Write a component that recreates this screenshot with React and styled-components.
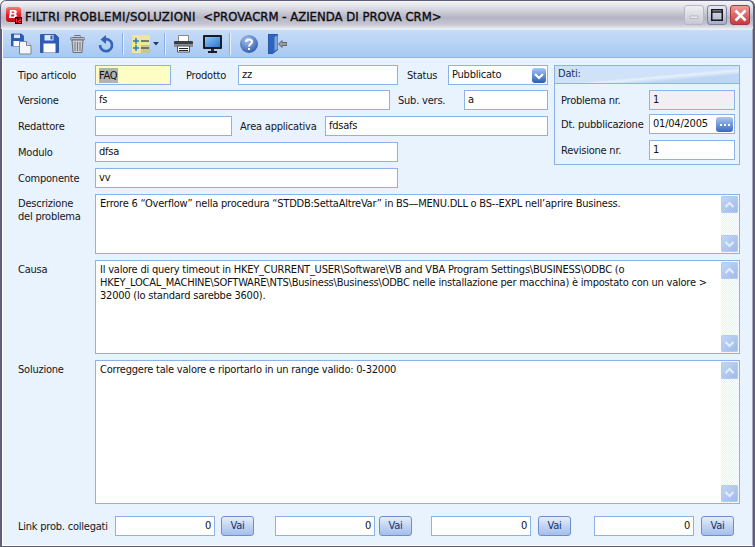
import React from "react";
import styled, { createGlobalStyle } from "styled-components";

const FONT = `"DejaVu Sans Condensed", "Noto Sans", sans-serif`;

const Global = createGlobalStyle`
  html, body { margin: 0; padding: 0; background: #fff; }
  body { width: 755px; height: 547px; overflow: hidden; font-family: ${FONT}; letter-spacing: -0.22px; }
`;

const Win = styled.div`
  width: 755px; height: 547px; box-sizing: border-box;
  display: flex; flex-direction: column;
  background: #5e5e7c; border-radius: 6px 6px 0 0; padding: 1px 2px 1px 1px; overflow: hidden;
`;
const TitleBar = styled.div`
  height: 28px; flex: none; display: flex; align-items: center; padding: 0 3px 0 5px;
  background: linear-gradient(#f6f6f8 0, #dcdce4 25%, #b4b4c4 60%, #c8c8d4 85%, #eeeef2 100%);
  border-radius: 5px 5px 0 0;
`;
const Title = styled.div`
  margin-left: 3px; padding-top: 2px; flex: 1; color: #0c0c10; font-size: 13px; font-weight: 400; white-space: pre; letter-spacing: 0;
  -webkit-text-stroke: 0.35px #0c0c10;
`;
const TitleLead = styled.span` letter-spacing: 0.24px; `;
const WinButtons = styled.div` display: flex; gap: 3px; `;
const WinBtn = styled.div`
  width: 20px; height: 20px; box-sizing: border-box; border-radius: 3px; display: flex; align-items: center; justify-content: center;
  border: 1px solid ${p => p.$border};
  background: ${p => p.$bg};
`;
const Inner = styled.div`
  flex: 1; display: flex; flex-direction: column; min-height: 0;
  border-left: 1px solid #fff; border-right: 1px solid #a8a8b8; border-bottom: 1px solid #fff;
  margin-left: 1px;
`;
const Toolbar = styled.div`
  height: 29px; flex: none; display: flex; align-items: center; padding-left: 4px;
  background: linear-gradient(#c6dcf8, #a8c9f2); border-top: 1px solid #e4eefa; border-bottom: 1px solid #8cb4ea;
  box-sizing: border-box;
`;
const ToolBtn = styled.div`
  width: ${p => p.$w || 28}px; height: 24px; flex: none; display: flex; align-items: center; justify-content: ${p => p.$start ? "flex-start" : "center"};
  padding-left: ${p => p.$start ? 5 : 0}px; box-sizing: border-box; gap: 3px;
`;
const ToolSep = styled.div`
  width: 1px; height: 22px; margin: 0 3px 0 4px; flex: none; background: #e6f0fc; box-shadow: -1px 0 0 #88aee4;
`;
const Body = styled.div`
  flex: 1; min-height: 0; box-sizing: border-box; padding: 7px 12px 0 15px; display: flex; flex-direction: column;
  background-color: #e9f3fd;
  background-image: radial-gradient(#e2eefb 0.5px, transparent 0.6px);
  background-size: 2px 2px;
`;
const Top = styled.div` display: flex; align-items: flex-start; `;
const Rows = styled.div` width: 533px; flex: none; display: flex; flex-direction: column; gap: 6px; `;
const Row = styled.div`
  display: flex; align-items: center; height: 20px; margin-top: ${p => p.$mt || 0}px;
`;
const Label = styled.div`
  width: ${p => p.$w}px; margin-left: ${p => p.$ml || 0}px; flex: none; font-size: 11px; line-height: 13px; color: #15151c; white-space: pre;
`;
const Box = styled.div`
  width: ${p => p.$w}px; height: 20px; box-sizing: border-box; flex: none; position: relative;
  border: 1px solid #8db2ea; background: ${p => p.$bg || "#fff"};
  font-size: 11px; line-height: 18px; padding: 0 3px; color: #111; white-space: pre; overflow: hidden;
  display: flex; align-items: center; justify-content: ${p => p.$right ? "flex-end" : "space-between"};
`;
const Selected = styled.span` background: #b2b2b2; display: inline-block; line-height: 15px; padding-right: 1px; `;
const Panel = styled.div`
  margin-left: 3px; width: 186px; height: 100px; box-sizing: border-box; flex: none;
  border: 1px solid #8db2ea; display: flex; flex-direction: column;
`;
const PanelHead = styled.div`
  height: 18px; flex: none; box-sizing: border-box; border-bottom: 1px solid #8db2ea; padding-left: 3px;
  font-size: 11px; line-height: 16px; color: #14306c;
  background: linear-gradient(175deg, #cfe2f8 55%, #e6f0fb 62%, #bdd6f5 75%);
`;
const PanelBody = styled.div`
  flex: 1; padding: 6px 4px 0 6px; display: flex; flex-direction: column;
`;
const PanelRow = styled.div` display: flex; align-items: center; height: 20px; margin-top: ${p => p.$mt || 0}px; `;
const AreaRow = styled.div` display: flex; margin-top: ${p => p.$mt}px; `;
const AreaLabel = styled.div`
  width: 77px; flex: none; padding-top: 3px; font-size: 11px; line-height: 13px; color: #15151c; white-space: pre-line;
`;
const Area = styled.div`
  width: 645px; height: ${p => p.$h}px; flex: none; box-sizing: border-box; display: flex;
  border: 1px solid #8db2ea; background: #fff;
`;
const AreaText = styled.div`
  flex: 1; padding: 2px 0 0 4px; font-size: 11px; line-height: 13px; color: #111; overflow: hidden; white-space: pre-line;
`;
const Scroll = styled.div`
  width: 18px; flex: none; padding: 1px 1px 1px 0; box-sizing: border-box; display: flex; flex-direction: column; justify-content: space-between;
  background: repeating-conic-gradient(#e6f0fc 0 25%, #fff 0 50%) 0 0 / 2px 2px;
`;
const ScrollBtn = styled.div`
  width: 17px; height: 17px; border-radius: 2px; display: flex; align-items: center; justify-content: center;
  background: linear-gradient(135deg, #c4d8f5, #9db9ea); box-shadow: inset 0 0 0 1px #b4caf0;
`;
const Bottom = styled.div` display: flex; align-items: center; height: 20px; margin-top: 12px; `;
const VaiBtn = styled.div`
  width: 33px; height: 20px; box-sizing: border-box; flex: none; margin-left: ${p => p.$ml}px; border: 1px solid #6d8fc8; border-radius: 3px;
  background: linear-gradient(#e6eefa, #c2d4f2 50%, #a4bfeb); color: #14306c; font-size: 11px; line-height: 17px; text-align: center;
`;
const Gap = styled.div` width: ${p => p.$w}px; flex: none; `;

const Chev = ({ up, color = "#e4eefc" }) => (
  <svg width="11" height="8" viewBox="0 0 11 8"><path d={up ? "M1.5 6 5.5 2 9.5 6" : "M1.5 2 5.5 6 9.5 2"} fill="none" stroke={color} strokeWidth="2" /></svg>
);
const ScrollBar = () => (
  <Scroll><ScrollBtn><Chev up /></ScrollBtn><ScrollBtn><Chev /></ScrollBtn></Scroll>
);

const AppIcon = () => (
  <svg width="16" height="18" viewBox="0 0 16 18" style={{ flex: "none" }}>
    <defs><linearGradient id="ai" x1="0" y1="0" x2="0" y2="1"><stop offset="0" stopColor="#fb7a7a" /><stop offset="0.5" stopColor="#e8202a" /><stop offset="1" stopColor="#b80f14" /></linearGradient></defs>
    <rect x="0" y="1" width="15" height="15" rx="3" fill="url(#ai)" />
    <path d="M4 4h5c2 0 2.5 3 .8 3.8C11.5 8.5 11 12 8.500 12H3Z M5.800 5.500 5.500 7h2.500l.3-1.500Z M5.300 8.500 5 10.500h3l.3-2Z" fill="#fff" fillRule="evenodd" />
    <rect x="9" y="11" width="7" height="7" fill="#1a0608" />
    <path d="M10.500 12.500v4M12.500 13h2.500v1.500h-2.500v2h2.500" stroke="#f33" strokeWidth="1" fill="none" />
  </svg>
);
const Floppy = ({ x = 0, y = 0 }) => (
  <g transform={`translate(${x} ${y})`}>
    <path d="M0 0h15l3 3v15H0Z" fill="#2a5cb8" stroke="#14348a" strokeWidth=".6" />
    <rect x="4" y="0.500" width="9" height="5.500" fill="#dfe8f6" />
    <rect x="10" y="1" width="2" height="4" fill="#2a5cb8" />
    <rect x="3" y="9" width="12" height="9" fill="#fff" />
  </g>
);
const IconSaveAs = () => (
  <svg width="21" height="22" viewBox="0 0 21 22">
    <path d="M0.500 1h10l2 2v10H.5Z" fill="#2a5cb8" stroke="#14348a" strokeWidth=".6" />
    <rect x="3" y="1.500" width="6" height="3.500" fill="#dfe8f6" /><rect x="2.500" y="8" width="6" height="5" fill="#fff" />
    <path d="M8.500 8.500h7l4.500 4v8.500H8.500Z" fill="#f4f6fa" stroke="#7a8496" />
    <path d="M15.500 8.500v4h4.500" fill="#d8dee8" stroke="#7a8496" />
  </svg>
);
const IconSave = () => <svg width="19" height="19" viewBox="0 0 19 19"><Floppy x=".5" y=".5" /></svg>;
const IconTrash = () => (
  <svg width="15" height="18" viewBox="0 0 15 18">
    <rect x="5" y="0.500" width="5" height="2" fill="none" stroke="#6a6e78" />
    <rect x="0.500" y="2.500" width="14" height="2.500" rx="1" fill="#b6bac2" stroke="#72767e" />
    <path d="M2 5h11l-1 12.500H3Z" fill="#c8ccd2" stroke="#6e727a" />
    <path d="M5 7v9M7.500 7v9M10 7v9" stroke="#74787f" />
  </svg>
);
const IconUndo = () => (
  <svg width="17" height="18" viewBox="0 0 17 18">
    <path d="M7 4.500A6 6 0 1 1 3 10" fill="none" stroke="#3464b8" strokeWidth="2.600" />
    <path d="M9 0 3.500 4.500 9 9Z" fill="#3464b8" />
  </svg>
);
const IconList = () => (
  <svg width="18" height="18" viewBox="0 0 18 18">
    <rect width="18" height="18" fill="#eee79a" /><rect x="9" y="10" width="9" height="8" fill="#c8c888" />
    <path d="M4 3v6M1 6h6M1 13h6M4 10v6" stroke="#2a7cc4" strokeWidth="1.500" />
    <path d="M9 6h8M9 13h8" stroke="#4a5a5a" strokeWidth="1.500" />
  </svg>
);
const IconCaret = () => <svg width="6" height="4" viewBox="0 0 6 4"><path d="M0 0h6L3 3.500Z" fill="#223a70" /></svg>;
const IconPrinter = () => (
  <svg width="19" height="18" viewBox="0 0 19 18">
    <path d="M4.500 0.500h10v6h-10Z" fill="#fff" stroke="#888" />
    <path d="M1 6h17a1 1 0 0 1 1 1v5H0V7a1 1 0 0 1 1-1Z" fill="#3b3f48" />
    <rect x="0" y="9" width="19" height="3" fill="#8a8e96" />
    <path d="M3.500 11h12v6h-12Z" fill="#fff" stroke="#555" />
    <path d="M5 13.500h9M5 15.500h9" stroke="#20242c" />
  </svg>
);
const IconMonitor = () => (
  <svg width="19" height="18" viewBox="0 0 19 18">
    <defs><linearGradient id="sc" x1="0" y1="0" x2="1" y2="1"><stop offset="0" stopColor="#8fc4f4" /><stop offset="1" stopColor="#2a78d8" /></linearGradient></defs>
    <rect width="19" height="14" rx="1" fill="#1a1c22" />
    <rect x="2" y="2" width="15" height="10" fill="url(#sc)" />
    <rect x="8" y="14" width="3" height="2" fill="#2a2c32" /><rect x="5" y="16" width="9" height="2" fill="#1a1c22" />
  </svg>
);
const IconHelp = () => (
  <svg width="18" height="18" viewBox="0 0 18 18">
    <defs><radialGradient id="hp" cx=".4" cy=".3" r=".8"><stop offset="0" stopColor="#a8c4f0" /><stop offset="1" stopColor="#2450a8" /></radialGradient></defs>
    <circle cx="9" cy="9" r="9" fill="url(#hp)" />
    <path d="M6 7c0-3.500 6-3.500 6 0 0 2-3 2-3 4.500" fill="none" stroke="#fff" strokeWidth="2" />
    <rect x="8" y="13" width="2" height="2" fill="#fff" />
  </svg>
);
const IconExit = () => (
  <svg width="19" height="20" viewBox="0 0 19 20">
    <path d="M0 0h9.500v16L4 20H0Z" fill="#2f64bc" stroke="#1c3f8e" strokeWidth=".6" />
    <path d="M6.500 3 9.500 1.500V15L6.500 17Z" fill="#7ea4de" />
    <path d="M10.500 10 14 6.500V8.500H19V11.500H14V13.500Z" fill="#9a9ca2" stroke="#44474e" strokeWidth=".7" />
  </svg>
);
const IconMin = () => <svg width="10" height="10" viewBox="0 0 10 10"><rect x="1" y="6" width="8" height="2.500" fill="#e8e8ee" stroke="#a0a0ac" strokeWidth=".6" /></svg>;
const IconMax = () => <svg width="12" height="12" viewBox="0 0 12 12"><path d="M.75.75h10.500v10.500H.75Z M.75 3h10.500" fill="none" stroke="#16161e" strokeWidth="1.500" /></svg>;
const IconClose = () => <svg width="13" height="13" viewBox="0 0 13 13"><path d="M1.500 1.500 11.500 11.500M11.500 1.500 1.500 11.500" stroke="#fff" strokeWidth="2.600" /></svg>;
const ComboBtn = () => (
  <svg width="14" height="15" viewBox="0 0 14 15" style={{ marginRight: -2, flex: "none" }}>
    <defs><linearGradient id="cb" x1="0" y1="0" x2="0" y2="1"><stop offset="0" stopColor="#a8c8f4" /><stop offset="1" stopColor="#2c5cb0" /></linearGradient></defs>
    <rect width="14" height="15" rx="3" fill="url(#cb)" />
    <path d="M3 6 7 10 11 6" fill="none" stroke="#fff" strokeWidth="2" />
  </svg>
);
const DotsBtn = () => (
  <svg width="17" height="15" viewBox="0 0 17 15" style={{ marginRight: -2, flex: "none" }}>
    <defs><linearGradient id="db" x1="0" y1="0" x2="0" y2="1"><stop offset="0" stopColor="#a8c8f4" /><stop offset="1" stopColor="#3a68bc" /></linearGradient></defs>
    <rect width="17" height="15" rx="3" fill="url(#db)" />
    <path d="M4 7h2v2H4ZM8 7h2v2H8ZM12 7h2v2h-2Z" fill="#fff" />
  </svg>
);

export default function App() {
  return (
    <Win>
      <Global />
      <TitleBar>
        <AppIcon />
        <Title><TitleLead>FILTRI PROBLEMI/SOLUZIONI</TitleLead>  &lt;PROVACRM - AZIENDA DI PROVA CRM&gt;</Title>
        <WinButtons>
          <WinBtn $border="#b8b8c8" $bg="linear-gradient(#eeeef2,#c8c8d4)"><IconMin /></WinBtn>
          <WinBtn $border="#7c84a0" $bg="linear-gradient(#e6e8f0,#a8acc4)"><IconMax /></WinBtn>
          <WinBtn $border="#a03a40" $bg="linear-gradient(#f09a9a,#c8383c)"><IconClose /></WinBtn>
        </WinButtons>
      </TitleBar>
      <Inner>
        <Toolbar>
          <ToolBtn><IconSaveAs /></ToolBtn>
          <ToolBtn><IconSave /></ToolBtn>
          <ToolBtn><IconTrash /></ToolBtn>
          <ToolBtn><IconUndo /></ToolBtn>
          <ToolSep />
          <ToolBtn $w={34} $start><IconList /><IconCaret /></ToolBtn>
          <ToolSep />
          <ToolBtn $w={29}><IconPrinter /></ToolBtn>
          <ToolBtn><IconMonitor /></ToolBtn>
          <ToolSep />
          <ToolBtn $w={29}><IconHelp /></ToolBtn>
          <ToolBtn><IconExit /></ToolBtn>
        </Toolbar>
        <Body>
          <Top>
            <Rows>
              <Row>
                <Label $w={77}>Tipo articolo</Label>
                <Box $w={76} $bg="#fdfdc4"><Selected>FAQ</Selected></Box>
                <Label $w={52} $ml={15}>Prodotto</Label>
                <Box $w={160}>zz</Box>
                <Label $w={41} $ml={9}>Status</Label>
                <Box $w={100}><span>Pubblicato</span><ComboBtn /></Box>
              </Row>
              <Row $mt={-1}>
                <Label $w={77}>Versione</Label>
                <Box $w={295}>fs</Box>
                <Label $w={66} $ml={8}>Sub. vers.</Label>
                <Box $w={84}>a</Box>
              </Row>
              <Row>
                <Label $w={77}>Redattore</Label>
                <Box $w={137} />
                <Label $w={85} $ml={8}>Area applicativa</Label>
                <Box $w={223}>fdsafs</Box>
              </Row>
              <Row>
                <Label $w={77}>Modulo</Label>
                <Box $w={303}>dfsa</Box>
              </Row>
              <Row>
                <Label $w={77}>Componente</Label>
                <Box $w={303}>vv</Box>
              </Row>
            </Rows>
            <Panel>
              <PanelHead>Dati:</PanelHead>
              <PanelBody>
                <PanelRow><Label $w={88}>Problema nr.</Label><Box $w={86} $bg="#f1eff4">1</Box></PanelRow>
                <PanelRow $mt={4}><Label $w={88}>Dt. pubblicazione</Label><Box $w={86}><span>01/04/2005</span><DotsBtn /></Box></PanelRow>
                <PanelRow $mt={6}><Label $w={88}>Revisione nr.</Label><Box $w={86}>1</Box></PanelRow>
              </PanelBody>
            </Panel>
          </Top>
          <AreaRow $mt={6}>
            <AreaLabel>{"Descrizione\ndel problema"}</AreaLabel>
            <Area $h={60}>
              <AreaText>Errore 6 “Overflow” nella procedura “STDDB:SettaAltreVar” in BS—MENU.DLL o BS--EXPL nell’aprire Business.</AreaText>
              <ScrollBar />
            </Area>
          </AreaRow>
          <AreaRow $mt={6}>
            <AreaLabel>Causa</AreaLabel>
            <Area $h={94}>
              <AreaText>{"Il valore di query timeout in HKEY_CURRENT_USER\\Software\\VB and VBA Program Settings\\BUSINESS\\ODBC (o\nHKEY_LOCAL_MACHINE\\SOFTWARE\\NTS\\Business\\Business\\ODBC nelle installazione per macchina) è impostato con un valore >\n32000 (lo standard sarebbe 3600)."}</AreaText>
              <ScrollBar />
            </Area>
          </AreaRow>
          <AreaRow $mt={6}>
            <AreaLabel>Soluzione</AreaLabel>
            <Area $h={144}>
              <AreaText>Correggere tale valore e riportarlo in un range valido: 0-32000</AreaText>
              <ScrollBar />
            </Area>
          </AreaRow>
          <Bottom>
            <Label $w={97}>Link prob. collegati</Label>
            <Box $w={100} $right>0</Box>
            <VaiBtn $ml={6}>Vai</VaiBtn>
            <Gap $w={21} />
            <Box $w={100} $right>0</Box>
            <VaiBtn $ml={4}>Vai</VaiBtn>
            <Gap $w={19} />
            <Box $w={100} $right>0</Box>
            <VaiBtn $ml={7}>Vai</VaiBtn>
            <Gap $w={23} />
            <Box $w={100} $right>0</Box>
            <VaiBtn $ml={7}>Vai</VaiBtn>
          </Bottom>
        </Body>
      </Inner>
    </Win>
  );
}
